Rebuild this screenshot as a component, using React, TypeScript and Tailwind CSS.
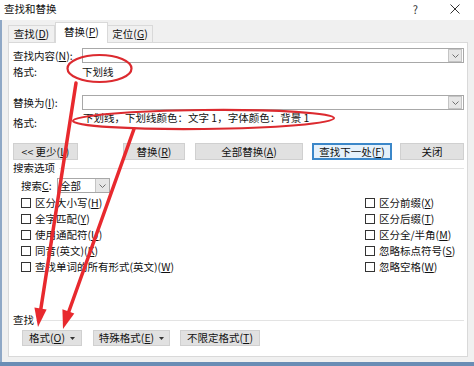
import React from "react";

const U = ({ c }: { c: string }) => <span className="underline underline-offset-1">{c}</span>;

const Chevron = () => (
  <svg width="7" height="4" viewBox="0 0 7 4">
    <path d="M0.5 0.5 L3.5 3.5 L6.5 0.5" fill="none" stroke="#707070" strokeWidth="1" />
  </svg>
);

const DropBtn = ({ h = 13 }: { h?: number }) => (
  <div
    className="w-[14px] flex items-center justify-center bg-[#e6e6e6] border border-[#c4c4c4]"
    style={{ height: h }}
  >
    <Chevron />
  </div>
);

const Tri = () => (
  <svg width="5" height="3" viewBox="0 0 5 3" className="ml-[5px]">
    <path d="M0 0 L5 0 L2.5 3 Z" fill="#333" />
  </svg>
);

const Btn = ({
  children,
  w,
  ml = 0,
  focus = false,
}: {
  children: React.ReactNode;
  w: number;
  ml?: number;
  focus?: boolean;
}) => (
  <div
    className={
      "h-full flex items-center justify-center " +
      (focus ? "bg-[#e5f1fb] border-2 border-[#3b87c9]" : "bg-[#e1e1e1] border border-[#d0d0d0]")
    }
    style={{ width: w, marginLeft: ml }}
  >
    {children}
  </div>
);

const Check = ({ children }: { children: React.ReactNode }) => (
  <div className="h-[16px] flex items-center">
    <div className="w-[10px] h-[10px] border border-[#333] bg-white shrink-0" />
    <span className="ml-[4px] whitespace-nowrap">{children}</span>
  </div>
);

export default function App() {
  return (
    <div className="relative w-[474px] h-[366px] overflow-hidden bg-[#f0f0f0] text-[10.5px] leading-[12px] text-[#111] font-['Noto_Sans_CJK_SC',sans-serif]">
      {/* title bar */}
      <div className="h-[20px] bg-white flex items-center pl-[4px] pb-[3px]">
        <span>查找和替换</span>
        <span className="ml-auto mr-[32px] text-[11px] text-[#333]">?</span>
        <svg width="10" height="10" viewBox="0 0 10 10" className="mr-[14px]">
          <path d="M0.5 0.5 L9.5 9.5 M9.5 0.5 L0.5 9.5" stroke="#333" strokeWidth="1" />
        </svg>
      </div>

      {/* body */}
      <div className="h-[342px] border-l-2 border-[#8fa8c6] flex flex-col">
        {/* tabs */}
        <div className="h-[22px] pl-[6px] flex items-end">
          <div className="w-[47px] h-[17px] border border-b-0 border-[#d9d9d9] bg-[#f0f0f0] flex items-center justify-center">
            查找(<U c="D" />)
          </div>
          <div className="relative z-10 w-[53px] h-[21px] -mb-px border border-b-0 border-[#d9d9d9] bg-white flex items-center justify-center pb-[3px]">
            替换(<U c="P" />)
          </div>
          <div className="w-[45px] h-[17px] border border-b-0 border-l-0 border-[#d9d9d9] bg-[#f0f0f0] flex items-center justify-center">
            定位(<U c="G" />)
          </div>
        </div>

        {/* panel */}
        <div className="ml-[6px] w-[460px] h-[315px] bg-white border border-[#d9d9d9] flex flex-col pl-[4px] pr-[3px]">
          {/* find row */}
          <div className="mt-[5px] h-[15px] flex items-center">
            <div className="w-[69px] whitespace-nowrap">
              查找内容(<U c="N" />):
            </div>
            <div className="flex-1 h-full border border-[#a8a8a8] bg-white flex justify-end items-center pr-px">
              <DropBtn h={13} />
            </div>
          </div>
          <div className="mt-[1px] h-[16px] flex items-center">
            <div className="w-[69px]">格式:</div>
            <div>下划线</div>
          </div>

          {/* replace row */}
          <div className="mt-[15px] h-[15px] flex items-center">
            <div className="w-[69px] whitespace-nowrap">
              替换为(<U c="I" />):
            </div>
            <div className="flex-1 h-full border border-[#a8a8a8] bg-white flex justify-end items-center pr-px">
              <DropBtn h={13} />
            </div>
          </div>
          <div className="mt-[2px] h-[19px] flex items-start">
            <div className="w-[70px] mt-[5px]">格式:</div>
            <div className="whitespace-nowrap">下划线，下划线颜色：文字 1，字体颜色：背景 1</div>
          </div>

          {/* buttons */}
          <div className="mt-[12px] h-[17px] flex">
            <Btn w={65}>
              &lt;&lt; 更少(<U c="L" />)
            </Btn>
            <Btn w={62} ml={45}>
              替换(<U c="R" />)
            </Btn>
            <Btn w={108} ml={10}>
              全部替换(<U c="A" />)
            </Btn>
            <Btn w={80} ml={9} focus>
              查找下一处(<U c="F" />)
            </Btn>
            <Btn w={64} ml={8}>
              关闭
            </Btn>
          </div>

          {/* search options */}
          <div className="mt-[2px] h-[12px] flex items-center">
            <span>搜索选项</span>
            <div className="flex-1 h-px bg-[#e3e3e3] ml-[4px]" />
          </div>
          <div className="mt-[4px] h-[15px] flex items-center pl-[8px]">
            <div className="w-[36px] whitespace-nowrap">
              搜索<U c="C" />:
            </div>
            <div className="w-[53px] h-full border border-[#a8a8a8] bg-white flex items-center">
              <span className="pl-[2px]">全部</span>
              <div className="ml-auto h-full">
                <div className="w-[14px] h-full flex items-center justify-center bg-[#e6e6e6] border-l border-[#c4c4c4]">
                  <Chevron />
                </div>
              </div>
            </div>
          </div>

          <div className="mt-[2px] flex">
            <div className="flex-1 pl-[8px] flex flex-col">
              <Check>
                区分大小写(<U c="H" />)
              </Check>
              <Check>
                全字匹配(<U c="Y" />)
              </Check>
              <Check>
                使用通配符(<U c="U" />)
              </Check>
              <Check>
                同音(英文)(<U c="K" />)
              </Check>
              <Check>
                查找单词的所有形式(英文)(<U c="W" />)
              </Check>
            </div>
            <div className="w-[99px] flex flex-col">
              <Check>
                区分前缀(<U c="X" />)
              </Check>
              <Check>
                区分后缀(<U c="T" />)
              </Check>
              <Check>
                区分全/半角(<U c="M" />)
              </Check>
              <Check>
                忽略标点符号(<U c="S" />)
              </Check>
              <Check>
                忽略空格(<U c="W" />)
              </Check>
            </div>
          </div>

          {/* find format */}
          <div className="mt-[39px] h-[12px] flex items-center">
            <span>查找</span>
            <div className="flex-1 h-px bg-[#e3e3e3] ml-[2px]" />
          </div>
          <div className="mt-[4px] h-[16px] flex pl-[9px]">
            <Btn w={60}>
              格式(<U c="O" />)
              <Tri />
            </Btn>
            <Btn w={77} ml={11}>
              特殊格式(<U c="E" />)
              <Tri />
            </Btn>
            <Btn w={80} ml={10}>
              不限定格式(<U c="T" />)
            </Btn>
          </div>
        </div>
      </div>

      {/* bottom strip */}
      <div className="h-[4px] bg-[#6a8db5]" />

      {/* red annotations */}
      <svg
        className="absolute left-0 top-0 pointer-events-none"
        width="474"
        height="366"
        viewBox="0 0 474 366"
      >
        <ellipse cx="99.5" cy="68.5" rx="32" ry="13.5" fill="none" stroke="#dc2a2f" strokeWidth="2.2" />
        <ellipse
          cx="203.5"
          cy="119.5"
          rx="130.5"
          ry="9.5"
          fill="none"
          stroke="#dc2a2f"
          strokeWidth="2.2"
          transform="rotate(-0.6 203.5 119.5)"
        />
        <line x1="76" y1="83" x2="40.5" y2="311" stroke="#e8292e" strokeWidth="3.5" strokeLinecap="round" />
        <polygon points="38,327 46.6,309.5 34.4,307.6" fill="#e8292e" />
        <line x1="134" y1="129" x2="68.3" y2="313" stroke="#e8292e" strokeWidth="3.5" strokeLinecap="round" />
        <polygon points="63,329 74.3,313.5 62.4,309.3" fill="#e8292e" />
      </svg>
    </div>
  );
}
